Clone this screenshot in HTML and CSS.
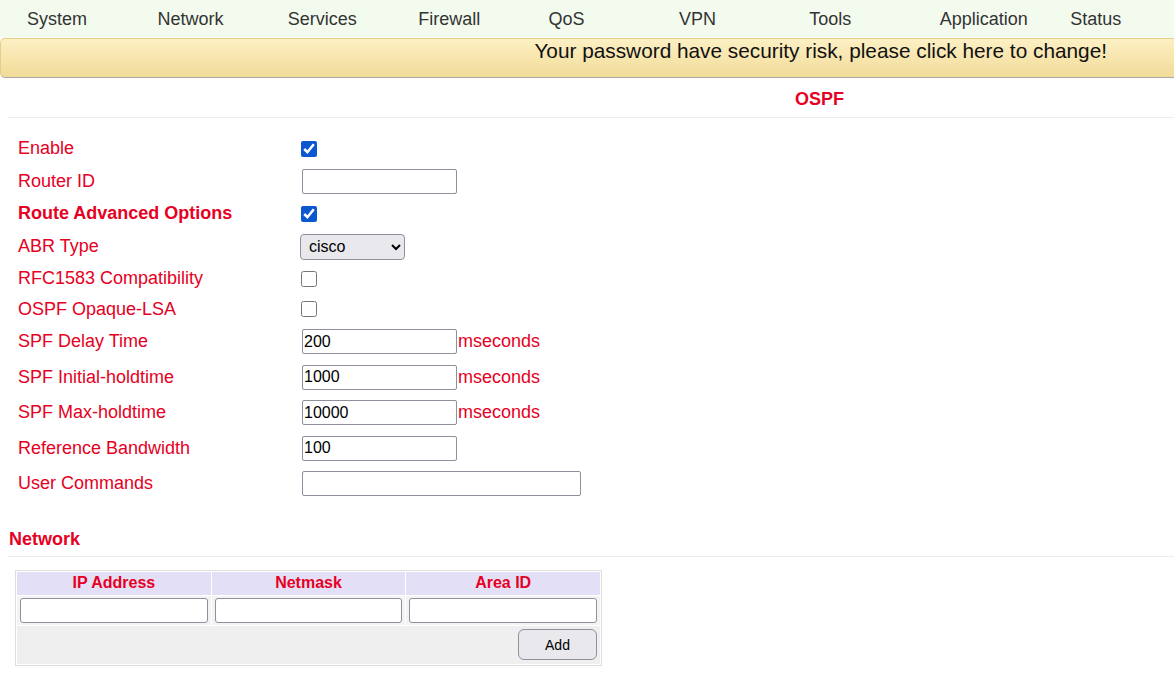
FILE: index.html
```html
<!DOCTYPE html>
<html>
<head>
<meta charset="utf-8">
<link rel="stylesheet" href="styles.css">
</head>
<body>
<nav class="nav">
  <span class="nav-item">System</span>
  <span class="nav-item">Network</span>
  <span class="nav-item">Services</span>
  <span class="nav-item">Firewall</span>
  <span class="nav-item">QoS</span>
  <span class="nav-item">VPN</span>
  <span class="nav-item">Tools</span>
  <span class="nav-item">Application</span>
  <span class="nav-item">Status</span>
</nav>
<div class="banner">Your password have security risk, please click here to change!</div>
<main class="content">
  <div class="title">OSPF</div>
  <div class="form">
    <div class="row h33"><label class="lbl">Enable</label><div class="ctl"><input type="checkbox" class="chk" checked></div></div>
    <div class="row h32"><label class="lbl">Router ID</label><div class="ctl"><input type="text" class="txt"></div></div>
    <div class="row h33"><label class="lbl bold">Route Advanced Options</label><div class="ctl"><input type="checkbox" class="chk" checked></div></div>
    <div class="row h33"><label class="lbl">ABR Type</label><div class="ctl"><select class="sel"><option>cisco</option></select></div></div>
    <div class="row h31"><label class="lbl">RFC1583 Compatibility</label><div class="ctl"><input type="checkbox" class="chk"></div></div>
    <div class="row h30"><label class="lbl">OSPF Opaque-LSA</label><div class="ctl"><input type="checkbox" class="chk"></div></div>
    <div class="row tall"><label class="lbl">SPF Delay Time</label><div class="ctl"><input type="text" class="txt" value="200"><span class="unit">mseconds</span></div></div>
    <div class="row tall"><label class="lbl">SPF Initial-holdtime</label><div class="ctl"><input type="text" class="txt" value="1000"><span class="unit">mseconds</span></div></div>
    <div class="row tall"><label class="lbl">SPF Max-holdtime</label><div class="ctl"><input type="text" class="txt" value="10000"><span class="unit">mseconds</span></div></div>
    <div class="row tall"><label class="lbl">Reference Bandwidth</label><div class="ctl"><input type="text" class="txt" value="100"></div></div>
    <div class="row tall"><label class="lbl">User Commands</label><div class="ctl"><input type="text" class="txt wide"></div></div>
  </div>
  <div class="section">Network</div>
  <table class="net">
    <tr class="head"><th>IP Address</th><th>Netmask</th><th>Area ID</th></tr>
    <tr class="inputs"><td><input type="text" class="cell-in"></td><td><input type="text" class="cell-in"></td><td><input type="text" class="cell-in"></td></tr>
    <tr class="foot"><td colspan="3"><button class="btn">Add</button></td></tr>
  </table>
</main>
</body>
</html>
```
FILE: styles.css
```css
html, body {
  margin: 0;
  padding: 0;
  background: #ffffff;
  font-family: "Liberation Sans", Arial, sans-serif;
}

.nav {
  height: 38px;
  background: #f3fbef;
  display: grid;
  grid-template-columns: repeat(8, 130.4px) auto;
  padding-left: 27px;
  align-items: center;
  box-sizing: border-box;
}

.nav-item {
  font-size: 18px;
  color: #333333;
  line-height: 38px;
}

.banner {
  height: 40px;
  box-sizing: border-box;
  background: linear-gradient(#fdf0c4, #f1db98);
  border-top: 1px solid #e5cf8a;
  border-left: 1px solid #e5cf8a;
  border-bottom: 1px solid #a9a9a9;
  border-top-left-radius: 5px;
  border-bottom-left-radius: 5px;
  text-align: right;
  padding-right: 67px;
  padding-top: 0;
  font-size: 20.8px;
  line-height: 24px;
  color: #111111;
}

.content {
  margin-left: 8px;
}

.title {
  height: 39px;
  border-bottom: 1px solid #ececec;
  font-size: 18px;
  font-weight: bold;
  color: #e60023;
  line-height: 42px;
  padding-left: 787px;
}

.form {
  margin-top: 14px;
}

.row {
  display: grid;
  grid-template-columns: 282px auto;
  align-items: center;
}

.row.h33 { height: 33px; }
.row.h32 { height: 32px; }
.row.h31 { height: 31px; }
.row.h30 { height: 30px; }
.row.tall { height: 35.5px; }

.lbl {
  padding-left: 10px;
  font-size: 18px;
  color: #e60023;
}

.lbl.bold { font-weight: bold; }

.ctl {
  display: flex;
  align-items: center;
}

.chk {
  width: 16px;
  height: 16px;
  margin: 0 0 0 11px;
  accent-color: #0b57d0;
}

.txt {
  width: 155px;
  height: 25px;
  box-sizing: border-box;
  margin: 0 0 0 12px;
  border: 1px solid #8f8f9d;
  border-radius: 2px;
  font-family: "Liberation Sans", Arial, sans-serif;
  font-size: 16px;
  padding: 1px 1px;
  color: #000;
}

.txt.wide { width: 279px; }

.sel {
  margin: 0 0 0 10px;
  width: 105px;
  height: 26px;
  box-sizing: border-box;
  border: 1px solid #8f8f9d;
  border-radius: 4px;
  background: #e9e9ed;
  font-family: "Liberation Sans", Arial, sans-serif;
  font-size: 16px;
  color: #000;
  padding-left: 4px;
}

.unit {
  font-size: 18px;
  color: #e60023;
  margin-left: 1px;
}

.section {
  margin-top: 21px;
  height: 33px;
  border-bottom: 1px solid #ececec;
  font-size: 18px;
  font-weight: bold;
  color: #e60023;
  line-height: 32px;
  padding-left: 1px;
}

.net {
  margin: 13px 0 0 7px;
  width: 587px;
  border: 1px solid #dddddd;
  border-spacing: 1px;
  table-layout: fixed;
}

.net th {
  background: #e3dff6;
  color: #e60023;
  font-size: 16px;
  font-weight: bold;
  height: 23px;
  padding: 0;
}

.net .inputs td {
  background: #f3f3f3;
  padding: 2px 3px;
  height: 25px;
}

.cell-in {
  width: 100%;
  height: 25px;
  box-sizing: border-box;
  border: 1px solid #8f8f9d;
  border-radius: 3px;
  margin: 0;
  display: block;
}

.net .foot td {
  background: #efefef;
  text-align: right;
  height: 38px;
  padding: 0 3px 0 0;
}

.btn {
  width: 79px;
  height: 31px;
  border: 1px solid #8f8f9d;
  border-radius: 6px;
  background: #e9e9ed;
  font-family: "Liberation Sans", Arial, sans-serif;
  font-size: 14px;
  color: #000;
}
```
